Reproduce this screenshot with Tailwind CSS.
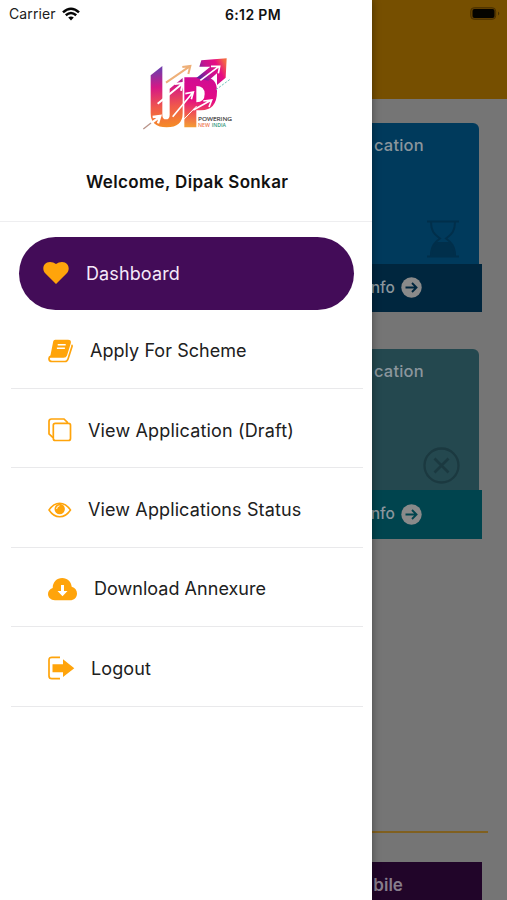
<!DOCTYPE html>
<html lang="en">
<head>
<meta charset="utf-8">
<meta name="viewport" content="width=device-width, initial-scale=1">
<title>Dashboard menu</title>
<script src="https://cdn.jsdelivr.net/npm/@tailwindcss/browser@4"></script>
</head>
<body class="h-[900px] overflow-hidden bg-[#757575] font-['Inter',sans-serif] text-[#202020]">
<div class="flex h-[900px] w-[507px] overflow-hidden">
  <aside class="z-10 flex w-[372.4px] shrink-0 flex-col bg-white shadow-[0_0_8px_rgba(0,0,0,0.4)]">
    <header class="flex h-[27px] shrink-0 items-center pl-[9px]">
      <span class="w-[53px] whitespace-nowrap text-[14px] tracking-[0.1px]">Carrier</span>
      <svg class="h-[14px] w-[18px]" viewBox="0 0 18 14" fill="none" stroke="#050505" stroke-width="2.5"><path d="M1 5.4Q9-2 17 5.4M3.8 8.3Q9 3.8 14.2 8.3"/><path d="M6.2 10.6Q9 8.3 11.8 10.6L9 13.5Z" fill="#050505" stroke="none"/></svg>
      <span class="ml-[145px] whitespace-nowrap pt-px text-[14px] font-semibold tracking-[0.35px] text-[#111]">6:12 PM</span>
    </header>
    <section class="flex h-[195px] shrink-0 flex-col border-b border-[#eeeef0] pt-[23px]">
      <svg class="ml-[140px] h-[85px] w-[100px]" viewBox="0 0 300 255">
        <defs>
          <linearGradient id="u" gradientUnits="userSpaceOnUse" x1="50" y1="60" x2="65" y2="232"><stop stop-color="#743caa"/><stop offset=".3" stop-color="#d51886"/><stop offset=".65" stop-color="#f0584c"/><stop offset="1" stop-color="#f58b27"/></linearGradient>
          <linearGradient id="p" gradientUnits="userSpaceOnUse" x1="190" y1="83" x2="175" y2="232"><stop stop-color="#cf0d94"/><stop offset=".45" stop-color="#e50b84"/><stop offset=".75" stop-color="#ef5a50"/><stop offset="1" stop-color="#f39a35"/></linearGradient>
          <linearGradient id="a" gradientUnits="userSpaceOnUse" x1="178" y1="80" x2="258" y2="40"><stop stop-color="#5c279d"/><stop offset=".35" stop-color="#c41391"/><stop offset=".7" stop-color="#e70b82"/><stop offset="1" stop-color="#f36a42"/></linearGradient>
        </defs>
        <path d="M32 76L67 48V194Q67 208 78 208Q89 208 89 194V116L128 84V190Q128 232 80 232Q32 232 32 190Z" fill="url(#u)"/>
        <path d="M133 82H193Q231 82 231 124Q231 181 183 181H169V232H133ZM169 108V157Q194 157 194 132Q194 108 169 108Z" fill="url(#p)" fill-rule="evenodd"/>
        <path d="M169 84L211 50H178L184 31L260 25L257 83L231 105V70L205 92Z" fill="url(#a)"/>
        <path d="M181 91L237 49M213 49H239L235 70" fill="none" stroke="#fff" stroke-width="5"/>
        <path d="M78 98L149 49M127 51L151 48L145 72" fill="none" stroke="#eeb079" stroke-width="6"/>
        <path d="M53 161L126 102M104 102L129 99L123 122" fill="none" stroke="#fff" stroke-width="6"/>
        <path d="M98 200L158 128M136 131L160 126L154 148M160 180L213 151M190 153L215 150L207 171" fill="none" stroke="#fff" stroke-width="5"/>
        <path d="M118 222L170 168" stroke="#fff" stroke-width="3"/>
        <path d="M228 119L270 88" stroke="#71c4be" stroke-width="3" stroke-dasharray="7 4"/>
        <path d="M10 237L60 200M38 201L61 198L54 220" fill="none" stroke="#fff" stroke-width="7"/>
        <path d="M10 237L33 219" stroke="#b99489" stroke-width="4"/>
        <path d="M172 195H280V235H172Z" fill="#fff"/>
        <text x="174" y="213" font-family="Open Sans,sans-serif" font-size="18" fill="#454545" stroke="#454545" stroke-width=".5" textLength="102" lengthAdjust="spacingAndGlyphs">POWERING</text>
        <text x="174" y="231" font-family="Open Sans,sans-serif" font-size="15" font-weight="600" fill="#ef7950" textLength="36" lengthAdjust="spacingAndGlyphs">NEW</text>
        <text x="215" y="231" font-family="Open Sans,sans-serif" font-size="15" font-weight="600" fill="#32977c" textLength="43" lengthAdjust="spacingAndGlyphs">INDIA</text>
      </svg>
      <h1 class="mt-[35px] ml-[86px] whitespace-nowrap text-[17px] leading-6 font-semibold tracking-[0.34px] text-[#111]">Welcome, Dipak Sonkar</h1>
    </section>
    <nav class="flex flex-col pt-[14.5px] text-[18px] tracking-[0.12px]">
      <a class="ml-[19px] flex h-[73px] w-[335px] items-center rounded-[37px] bg-[#430c58] pl-[24px] text-[#f5e9fa]">
        <svg class="h-[24px] w-[26px]" viewBox="0 0 26 24" fill="#ffa40b"><path d="M13 23L2.2 12.2C-1.5 8.2.3 1 7 1Q10.5 1 13 3Q15.5 1 19 1C25.7 1 27.5 8.2 23.8 12.2Z"/></svg>
        <span class="ml-[17px] whitespace-nowrap">Dashboard</span>
      </a>
      <a class="mr-[9px] ml-[11px] flex h-[79.5px] items-center border-b border-[#e9e9eb] pl-[37px] pt-[4px]">
        <svg class="h-[24px] w-[25px]" viewBox="0 0 25 24" fill="none" stroke="#ffa40b" stroke-width="1.7"><path d="M7.2 1.5H20Q22.6 1.5 22 4L18.2 16.2Q17.6 18 15.5 18H3L6 3Q6.2 1.5 7.2 1.5Z" fill="#ffa40b"/><path d="M3 17Q.5 18 1.1 20.5Q1.5 22.5 4 22.5H17Q19.2 22.5 20 20L24 7.5Q24.3 6.5 23.5 6"/><path d="M9.7 5.7H17.7M8.9 9.2H16.9" stroke="#fff" stroke-width="1.4"/></svg>
        <span class="ml-[17px] whitespace-nowrap tracking-[0.05px]">Apply For Scheme</span>
      </a>
      <a class="mr-[9px] ml-[11px] flex h-[79.4px] items-center border-b border-[#e9e9eb] pl-[37px] pt-[4px]">
        <svg class="h-[24px] w-[24px]" viewBox="0 0 24 24" fill="none" stroke="#ffa40b" stroke-width="1.7"><rect x="5.3" y="5.3" width="17.2" height="17.2" rx="2"/><path d="M5.3 19.2H4.5L1 16V3.5Q1 1 3.5 1H16L19.2 4.2V5.3"/></svg>
        <span class="ml-[16px] whitespace-nowrap tracking-[0.16px]">View Application (Draft)</span>
      </a>
      <a class="mr-[9px] ml-[11px] flex h-[79.4px] items-center border-b border-[#e9e9eb] pl-[37px] pt-[4px]">
        <svg class="h-[24px] w-[24px]" viewBox="0 0 24 24" fill="none" stroke="#ffa40b" stroke-width="1.5"><path d="M1 12Q5.5 5.2 11.7 5.2T22.5 12Q18 18.8 11.7 18.8T1 12Z"/><circle cx="11.7" cy="11" r="5.2" fill="#ffa40b" stroke="none"/><path d="M8.6 11Q8.7 8.1 11.5 7.8" stroke="#fff" stroke-width="1"/></svg>
        <span class="ml-[16px] whitespace-nowrap">View Applications Status</span>
      </a>
      <a class="mr-[9px] ml-[11px] flex h-[79.4px] items-center border-b border-[#e9e9eb] pl-[37px] pt-[4px]">
        <svg class="h-[24px] w-[29px]" viewBox="0 0 29 24"><path d="M7 23.2C2.6 23.2 0 20.3 0 17Q0 12.8 4.7 11C4.7 5 8.8 1 14.2 1C19.5 1 23.2 4.5 23.7 9.8C27.1 10.8 29 13.4 29 16.4C29 20.4 26 23.2 22 23.2Z" fill="#ffa40b"/><path d="M13 8H16V14H19.5L14.5 19.3L9.5 14H13Z" fill="#fff"/></svg>
        <span class="ml-[17px] whitespace-nowrap tracking-[0.03px]">Download Annexure</span>
      </a>
      <a class="mr-[9px] ml-[11px] flex h-[79.4px] items-center border-b border-[#e9e9eb] pl-[37px] pt-[4px]">
        <svg class="h-[24px] w-[27px]" viewBox="0 0 27 24"><path d="M12 1.3H4Q1 1.3 1 4V20Q1 22.7 4 22.7H12" fill="none" stroke="#ffa40b" stroke-width="1.7"/><path d="M4.5 8.2H15V3.2L26.3 12.2L15 21V16.3H4.5Z" fill="#ffa40b"/></svg>
        <span class="ml-[16px] whitespace-nowrap">Logout</span>
      </a>
    </nav>
  </aside>
  <main class="flex min-w-0 flex-1 flex-col overflow-hidden text-[16.5px] font-medium tracking-[0.2px] text-[#8b969d]">
    <div class="flex h-[98.5px] shrink-0 justify-end bg-[#764f00] pt-[7px] pr-[6px]">
      <svg class="h-[13px] w-[31px]" viewBox="0 0 31 13"><rect x=".7" y=".7" width="25" height="11.6" rx="3.5" fill="#664300" stroke="#4a3100"/><rect x="2.5" y="2" width="22" height="9" rx="2" fill="#050400"/><path d="M28 4.5Q30.5 6.5 28 8.5Z" fill="#483000"/></svg>
    </div>
    <article class="mt-[24.5px] h-[189px] w-[110px] shrink-0">
      <div class="flex h-[140.5px] w-[106.5px] flex-col items-end justify-between rounded-tr-[6px] bg-[#003a5c]">
        <span class="mt-[10px] mr-[55px] whitespace-nowrap">cation</span>
        <svg class="mr-[20px] mb-[6px] h-[38px] w-[32px]" viewBox="0 0 32 38" fill="none" stroke="#002f4b" stroke-width="2"><path d="M0 1.5H32M0 36.5H32M4 2C4 13 9 15 13 18.5C8 22 4 26 4 36M28 2C28 13 23 15 19 18.5C24 22 28 26 28 36"/><path d="M4 36Q5 26 10 23H22Q27 26 28 36Z" fill="#002f4b"/></svg>
      </div>
      <div class="flex h-[48.5px] items-center justify-end bg-[#00263e] pr-[60.5px]">
        <span class="whitespace-nowrap text-[15.5px] tracking-normal">nfo</span>
        <svg class="ml-[6px] h-[21px] w-[21px] shrink-0" viewBox="0 0 21 21"><circle cx="10.5" cy="10.5" r="10.2" fill="#8a8a8a"/><path d="M4.5 10.5H15.5M11 6L15.5 10.5L11 15" fill="none" stroke="#00263e" stroke-width="1.9"/></svg>
      </div>
    </article>
    <article class="mt-[37px] h-[189.5px] w-[110px] shrink-0">
      <div class="flex h-[140.5px] w-[106.5px] flex-col items-end justify-between rounded-tr-[6px] bg-[#24484f]">
        <span class="mt-[10px] mr-[55px] whitespace-nowrap">cation</span>
        <svg class="mr-[19px] mb-[6px] h-[37px] w-[37px]" viewBox="0 0 37 37" fill="none" stroke="#1b3940" stroke-width="2.3"><circle cx="18.5" cy="18.5" r="17"/><path d="M11.5 11.5L25.5 25.5M25.5 11.5L11.5 25.5" stroke-width="2.7"/></svg>
      </div>
      <div class="flex h-[49px] items-center justify-end bg-[#00444e] pr-[60.5px]">
        <span class="whitespace-nowrap text-[15.5px] tracking-normal">nfo</span>
        <svg class="ml-[6px] h-[21px] w-[21px] shrink-0" viewBox="0 0 21 21"><circle cx="10.5" cy="10.5" r="10.2" fill="#8a8a8a"/><path d="M4.5 10.5H15.5M11 6L15.5 10.5L11 15" fill="none" stroke="#00444e" stroke-width="1.9"/></svg>
      </div>
    </article>
    <div class="mt-[292.5px] h-[2px] w-[115.5px] shrink-0 bg-[#806020]"></div>
    <button class="mt-[29px] flex h-[48px] w-[109.5px] shrink-0 items-center justify-end bg-[#210529] pr-[79px] text-[17px] font-semibold tracking-normal text-[#877d8c]"><span class="whitespace-nowrap">bile</span></button>
  </main>
</div>
</body>
</html>
